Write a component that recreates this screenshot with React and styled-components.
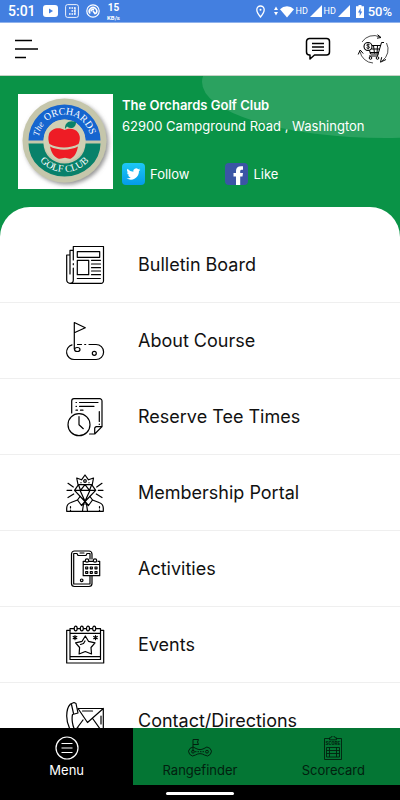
import React from "react";
import styled, { createGlobalStyle } from "styled-components";

const menuItems = [
  { label: "Bulletin Board", href: "#bulletin", icon: <BulletinIcon /> },
  { label: "About Course", href: "#about", icon: <CourseIcon /> },
  { label: "Reserve Tee Times", href: "#tee-times", icon: <TeeTimesIcon /> },
  { label: "Membership Portal", href: "#membership", icon: <MembershipIcon /> },
  { label: "Activities", href: "#activities", icon: <ActivitiesIcon /> },
  { label: "Events", href: "#events", icon: <EventsIcon /> },
  { label: "Contact/Directions", href: "#contact", icon: <ContactIcon /> },
];

const App = () => {
  return (
    <>
      <GlobalStyle />
      <Screen>
        <StatusBar />
        <Header>
          <IconButton aria-label="Open menu">
            <svg width="24" height="22" viewBox="0 0 24 22" stroke="#000" strokeWidth="1.6">
              <path d="M0 2.5h17M0 11h23M0 19.5h11" />
            </svg>
          </IconButton>
          <HeaderActions>
            <IconButton aria-label="Messages">
              <ChatIcon />
            </IconButton>
            <IconButton aria-label="Cart">
              <CartIcon />
            </IconButton>
          </HeaderActions>
        </Header>
        <Main>
          <Hero>
            <ClubLogo />
            <ClubInfo>
              <ClubName>The Orchards Golf Club</ClubName>
              <Address>62900 Campground Road , Washington</Address>
              <Socials>
                <SocialLink href="#twitter">
                  <TwitterIcon /> Follow
                </SocialLink>
                <SocialLink href="#facebook">
                  <FacebookIcon /> Like
                </SocialLink>
              </Socials>
            </ClubInfo>
          </Hero>
          <Sheet>
            {menuItems.map((item) => (
              <MenuLink href={item.href} key={item.label}>
                {item.icon}
                {item.label}
              </MenuLink>
            ))}
          </Sheet>
        </Main>
        <TabBar>
          <Tab $active>
            <MenuTabIcon />
            Menu
          </Tab>
          <Tab>
            <RangeIcon />
            Rangefinder
          </Tab>
          <Tab>
            <ScoreIcon />
            Scorecard
          </Tab>
        </TabBar>
        <GestureBar>
          <Pill />
        </GestureBar>
      </Screen>
    </>
  );
};

function StatusBar() {
  return (
    <Status>
      <Clock>5:01</Clock>
      <StatusGroup>
        <svg width="15" height="12" viewBox="0 0 15 12">
          <rect width="15" height="12" rx="3" fill="#fff" />
          <path d="M6 3.5v5l4-2.5z" fill="#437fe0" />
        </svg>
        <svg width="14" height="14" viewBox="0 0 14 14" fill="none" stroke="#fff">
          <rect x=".6" y=".6" width="12.8" height="12.8" rx="2" strokeWidth=".9" />
          <path d="M4 4h6.500M6.500 7h4M4 10h6.500" strokeWidth="1.500" strokeDasharray="1.600 .9" />
          <path d="M10 3.500v7" strokeWidth="1" />
        </svg>
        <svg width="14" height="14" viewBox="0 0 14 14" fill="none" stroke="#fff">
          <circle cx="7" cy="7" r="6.200" strokeWidth="1.200" />
          <path d="M4.200 9.600a3.700 3.700 0 1 1 5.600 0M7 7l2.500 3.300M5 7.500a2 2 0 0 1 3-1.800" strokeWidth="1.600" />
        </svg>
        <Speed>
          <b>15</b>
          <small>KB/s</small>
        </Speed>
      </StatusGroup>
      <Signals>
        <PinSvg width="9" height="13" viewBox="0 0 9 13" fill="none" stroke="#fff" strokeWidth="1.300">
          <path d="M4.500 12C2 9 .8 6.500.8 4.700a3.700 3.700 0 0 1 7.400 0C8.200 6.500 7 9 4.500 12z" />
          <circle cx="4.500" cy="4.700" r="1" fill="#fff" stroke="none" />
        </PinSvg>
        <svg width="20" height="13" viewBox="0 0 20 13" fill="#fff">
          <path d="M0 5l2-3.500L4 5zM0 7l2 3.500L4 7z" />
          <path d="M6 4.200a10 10 0 0 1 14 0L13 12.500z" />
        </svg>
        <Hd>HD</Hd>
        <svg width="12" height="12" viewBox="0 0 12 12" fill="#fff">
          <path d="M12 0v12H0z" />
        </svg>
        <Hd>HD</Hd>
        <svg width="12" height="12" viewBox="0 0 12 12" fill="#fff">
          <path d="M12 0v12H0z" />
        </svg>
        <BatterySvg width="8" height="13" viewBox="0 0 8 13">
          <path d="M2.500 0h3v1.200H8V13H0V1.200h2.500z" fill="#fff" />
          <path d="M4.600 3L2 7.500h1.700V11L6.200 6.500H4.600z" fill="#437fe0" />
        </BatterySvg>
        <Percent>50%</Percent>
      </Signals>
    </Status>
  );
}

function ChatIcon() {
  return (
    <svg width="26" height="24" viewBox="0 0 26 24" fill="none" stroke="#000" strokeWidth="1.500" strokeLinejoin="round">
      <path d="M4.500 1.500h17a3 3 0 0 1 3 3V15a3 3 0 0 1-3 3H9.500L5 22v-4h-.5a3 3 0 0 1-3-3V4.500a3 3 0 0 1 3-3z" />
      <path d="M7 6.500h12M7 10h12M7 13.300h12" strokeWidth="1.300" />
    </svg>
  );
}

function CartIcon() {
  return (
    <svg width="32" height="30" viewBox="0 0 32 30" fill="none" stroke="#000">
      <path d="M5 8A14 14 0 0 1 23 3M29.500 9A14 14 0 0 1 25 27M16 29A14 14 0 0 1 3 17.500" strokeWidth=".7" />
      <path d="M20.500.7L24 3.500 20 4.200M29 25.500l-5.500 2.700 1.200-5M1.200 20.500L3.200 16l3 3.500" strokeWidth="1" />
      <circle cx="11" cy="12.500" r="4" strokeWidth="1.100" />
      <path d="M12.600 10.800c-1-1-3-.7-2.800.5.200 1 2.700.7 2.700 2 0 1.200-2 1.400-3 .4M11.100 9.700v5.800" strokeWidth=".9" />
      <path d="M27 8.500h-2.500L20.500 22H12M15 11.500h9M13 18.500h9M14.500 15h8M12.500 16.500l1 3.500h8M16.500 11.500l1 8M20.500 11.500l-.5 8" strokeWidth="1" />
      <circle cx="13.500" cy="24" r="1.300" strokeWidth="1" />
      <circle cx="20.500" cy="24" r="1.300" strokeWidth="1" />
    </svg>
  );
}

function ClubLogo() {
  return (
    <LogoBox>
      <svg width="95" height="95" viewBox="0 0 95 95" role="img" aria-label="The Orchards Golf Club">
        <defs>
          <filter id="logoShadow" x="-20%" y="-20%" width="140%" height="140%">
            <feDropShadow dx="2" dy="2" stdDeviation="2" floodColor="#777" floodOpacity=".8" />
          </filter>
          <path id="topArc" d="M20.500 46.500A26 26 0 0 1 72.500 46.500" />
          <path id="bottomArc" d="M14.500 47A32 31 0 0 0 78.500 47" />
        </defs>
        <circle cx="46.500" cy="46.500" r="42" fill="#c5c6ab" filter="url(#logoShadow)" />
        <path d="M10.500 46.500a36 36 0 0 1 72 0h-15a21 21 0 0 0-42 0z" fill="#1565cf" />
        <path d="M10.500 49.500a36 33 0 0 0 72 0h-15a21 20 0 0 1-42 0z" fill="#08816a" />
        <path d="M25.500 46.500a21 21 0 1 0 42 0 21 21 0 1 0-42 0" fill="#cfd0b4" />
        <LogoText fontSize="9" fontStyle="italic">
          <textPath href="#topArc" startOffset="4">The</textPath>
        </LogoText>
        <LogoText fontSize="10">
          <textPath href="#topArc" startOffset="21">ORCHARDS</textPath>
        </LogoText>
        <LogoText fontSize="10" textAnchor="middle">
          <textPath href="#bottomArc" startOffset="50%">GOLF CLUB</textPath>
        </LogoText>
        <path
          d="M46.500 36c-5-3-13-2-15.500 4-1.200 4-.5 7.500.5 10 8 4.500 21 4.500 29 0 1.800-4 2-8-.5-11.500C57 34 51 34 46.500 36z"
          fill="#ee1c25"
        />
        <path d="M32 52.500c8 4.200 20 4.200 28 0-1 5-3 10-7 12-2.500.7-4-.8-6-.8s-4 1.500-7 .8c-4.500-2-7-7-8-12z" fill="#ee1c25" />
        <path d="M47 35c-.5-6 4-9.500 11-7 0 6-5 7.500-9 4.500z" fill="#08816a" />
      </svg>
    </LogoBox>
  );
}

function TwitterIcon() {
  return (
    <svg width="23" height="22" viewBox="0 0 23 22">
      <defs>
        <linearGradient id="tw" x1="0" y1="0" x2="0" y2="1">
          <stop offset="0" stopColor="#1dc8f5" />
          <stop offset="1" stopColor="#049be9" />
        </linearGradient>
      </defs>
      <rect width="23" height="22" rx="4" fill="url(#tw)" />
      <path
        transform="translate(4.500 4) scale(.58)"
        fill="#fff"
        d="M24 4.600a10 10 0 0 1-2.800.8 5 5 0 0 0 2.100-2.700c-1 .6-2 1-3.100 1.200a4.900 4.900 0 0 0-8.400 4.500A14 14 0 0 1 1.700 3.200a4.900 4.900 0 0 0 1.500 6.500c-.8 0-1.600-.2-2.200-.6a4.900 4.900 0 0 0 3.900 4.900c-.7.200-1.500.2-2.200.1a4.900 4.900 0 0 0 4.600 3.400A9.900 9.900 0 0 1 0 19.500a14 14 0 0 0 21.500-12.400c1-.7 1.800-1.600 2.500-2.500z"
      />
    </svg>
  );
}

function FacebookIcon() {
  return (
    <svg width="23" height="22" viewBox="0 0 23 22">
      <rect width="23" height="22" rx="4" fill="#3b55a5" />
      <path d="M11 22v-8.500H8.500V10H11V8c0-3.800 2.200-5.300 7-4.700v3.400c-2.200 0-2.800.3-2.800 1.600V10H18l-.5 3.500h-2.300V22z" fill="#fff" />
    </svg>
  );
}

function BulletinIcon() {
  return (
    <LineIcon viewBox="0 0 40 40">
      <path d="M8.300 15V1.500h30.200V36a2.300 2.300 0 0 1-2.300 2.300H5A3.300 3.300 0 0 1 1.700 35V10h3.300M5 29V5.300h3.300M8.300 23v12A3.300 3.300 0 0 1 5 38.300M8.300 18.700v1" />
      <path d="M12.300 6.700h22.400v5.600H12.300zM12.300 15.300h11.400v14.400H12.300zM26.500 15.300h9M26.500 19h9M26.500 22.700h9M26.500 26h9M26.500 29.700h9M12.300 33.500h23" />
    </LineIcon>
  );
}

function CourseIcon() {
  return (
    <LineIcon viewBox="0 0 40 40">
      <path d="M9.300 28V1.500l11 5.200-11 5" />
      <path d="M7 23.800A7.500 7.500 0 0 0 9.200 38.500h21.900a7.500 7.500 0 0 0 0-15H24M12.500 23.500h4M19.700 23.500h1" />
      <ellipse cx="12.300" cy="28.500" rx="2.700" ry="2" />
      <circle cx="29.300" cy="32.300" r="2" />
    </LineIcon>
  );
}

function TeeTimesIcon() {
  return (
    <LineIcon viewBox="0 0 40 40">
      <path d="M6.700 16V4a2.300 2.300 0 0 1 2.300-2.300h25.700A2.300 2.300 0 0 1 37 4v25.700L29.700 37h-5.200M37 29.700h-5.500a1.800 1.800 0 0 0-1.800 1.800V37" />
      <path d="M11 5.500h.5M14.500 5.500H33M11 9.300h.5M14.500 9.300H29M11 13.200h1.500M15.500 13.200h2.500M34.300 14.500v10M34.300 27v.5" />
      <circle cx="14" cy="27.700" r="11" />
      <path d="M14 19.500v8.200l4.300 4" />
    </LineIcon>
  );
}

function MembershipIcon() {
  return (
    <LineIcon viewBox="0 0 40 40">
      <path d="M13 11.500L11.700 5l4.800 1.800L20 2l3.500 4.800L28.500 5l-1.200 6.500" />
      <circle cx="20" cy="8" r="1.300" />
      <path d="M16 9.500v.3M24 9.500v.3" />
      <path d="M13.500 11.700h13.200l4 5.600L20 28.500 9.500 17.300zM9.500 17.300h21.200M15 17.300l5 11 5-11M13.500 11.700l2 5.600 4.500-5.600 4.500 5.600 2.200-5.600" />
      <path d="M3 10.300L8.300 14M2 17.300h4.700M3 24.500L8.700 21M37 10.300L31.700 14M38 17.300h-4.700M37 24.500L31.300 21" />
      <path d="M12.500 27L6 29.500a6 6 0 0 0-4.300 5.500v3.300h36.600V35a6 6 0 0 0-4.300-5.500L27.500 27" />
      <path d="M15 23.500l-2.500 3.500 4 5.500 3.500-4 3.500 4 4-5.500-2.500-3.500M18.500 31l-1 7M21.500 31l1 7M18.500 31h3M5.500 33.500v1.500M5.500 37v1M34.500 33.500v1.500M34.500 37v1" />
    </LineIcon>
  );
}

function ActivitiesIcon() {
  return (
    <LineIcon viewBox="0 0 40 40">
      <path d="M27 10V5a3 3 0 0 0-3-3H9.500a3 3 0 0 0-3 3v29.500a3 3 0 0 0 3 3H24a3 3 0 0 0 3-3V27" />
      <path d="M25 10V4.500h-3l-1 2h-8l-1-2H8.700V35H25v-8" />
      <path d="M15 4h4" />
      <circle cx="16.700" cy="31.300" r="1.300" />
      <path d="M20 12.300h-1.800v14.400h16.500V12.300H33M24 12.300h4M18.200 15.500h16.500" />
      <circle cx="22" cy="11.500" r="1.700" />
      <circle cx="30" cy="11.500" r="1.700" />
      <path d="M20.700 18h2v1.800h-2zM25.300 18h2v1.800h-2zM30 18h2v1.800h-2zM20.700 22.500h2v1.800h-2zM25.300 22.500h2v1.800h-2zM30 22.500h2v1.800h-2z" />
    </LineIcon>
  );
}

function EventsIcon() {
  return (
    <LineIcon viewBox="0 0 40 40">
      <path d="M5 5.300H1.700V38h37V5.300h-3.200" />
      <path d="M9 3.700H5v30.800h30.500V3.700H31M12.300 3.700H15M18.500 3.700h2.700M24.800 3.700h2.700M5 8.300h30.500M5 31.700h30.500" />
      <ellipse cx="10.700" cy="3.500" rx="1.500" ry="2.400" />
      <ellipse cx="16.800" cy="3.500" rx="1.500" ry="2.400" />
      <ellipse cx="23" cy="3.500" rx="1.500" ry="2.400" />
      <ellipse cx="29.200" cy="3.500" rx="1.500" ry="2.400" />
      <path d="M20.300 11l3.200 5.300 6.500 1.500-4 4.700.5 6.500-6.200-2.500-6.200 2.500.5-6.500-4-4.700 6.500-1.500z" />
      <path d="M15.500 19.500l3-1L20 16M10 10.500v4.200M8.200 11.500l3.600 2.200M11.800 11.500l-3.600 2.200M30.500 10.500v4.200M28.700 11.500l3.600 2.200M32.300 11.500l-3.600 2.200" />
    </LineIcon>
  );
}

function ContactIcon() {
  return (
    <LineIcon viewBox="0 0 40 40">
      <path d="M13 7.500h25.300V34H14M13 7.500l9.500 14 15.800-14M17.500 10h10M36 15v8M12 27l6-8M38 32l-10-14" />
      <path d="M9 1.500L5.500 3C2.500 6 1.700 10 1.700 15c0 8 4 17 10 21.500l5-3-3.500-6.500-3.500 1.500C7.500 25 6.500 18 7.500 13.500l5.500-1.500-2-9.500z" />
      <path d="M6.500 3.500l2 9" />
    </LineIcon>
  );
}

function MenuTabIcon() {
  return (
    <svg width="24" height="24" viewBox="0 0 24 24" fill="none" stroke="#fff" strokeWidth="1.200">
      <circle cx="12" cy="12" r="11" />
      <path d="M6.500 7.500h11M6.500 12h11M6.500 16.500h11" />
    </svg>
  );
}

function RangeIcon() {
  return (
    <svg width="24" height="24" viewBox="0 0 24 24" fill="none" stroke="#02200f" strokeWidth="1">
      <path d="M5 15.500V3.500M5 3.500h5.500L9.500 6l1 2.500H5" />
      <path d="M8 12.500a4.300 4.300 0 1 0-.5 6.500c3-1.800 6-1.800 9 0a4.300 4.300 0 1 0-.5-6.500c-3 1.500-5 1.500-8 0z" />
      <path d="M7 15.700h10" strokeDasharray="1.500 1" />
      <circle cx="5" cy="15.700" r="1.400" />
      <circle cx="19" cy="15.700" r="1.400" />
    </svg>
  );
}

function ScoreIcon() {
  return (
    <svg width="24" height="24" viewBox="0 0 24 24" fill="none" stroke="#02200f" strokeWidth=".9">
      <path d="M9 2.500H3.500v21h17v-21H15M8.500 3.800v-2H10a2 2 0 0 1 4 0h1.500v2z" />
      <text x="12" y="9.200" fontSize="5" fontWeight="700" fontFamily="Liberation Mono, monospace" textAnchor="middle" fill="#02200f" stroke="none">
        SCORE
      </text>
      <path d="M5.500 11.500h13v9.500h-13zM5.500 14.500h13M5.500 17.500h13M8.500 11.500V21M15.500 11.500V21" />
    </svg>
  );
}

const GlobalStyle = createGlobalStyle`
  * {
    box-sizing: border-box;
  }

  body {
    margin: 0;
    font-family: "Inter", "Liberation Sans", sans-serif;
  }

  svg {
    flex-shrink: 0;
    display: block;
  }
`;

const Screen = styled.div`
  display: flex;
  flex-direction: column;
  height: 100vh;
  overflow: hidden;
`;

const Status = styled.div`
  display: flex;
  align-items: center;
  height: 23px;
  padding: 0 8px;
  background-color: #437fe0;
  border-bottom: 1px solid #8fb2ec;
  color: white;
  font-family: "Roboto", sans-serif;
`;

const Clock = styled.span`
  width: 35px;
  font-size: 14px;
  font-weight: 500;
`;

const StatusGroup = styled.div`
  display: flex;
  align-items: center;
  gap: 7px;
`;

const Speed = styled.span`
  display: flex;
  flex-direction: column;
  align-items: center;

  b {
    font-size: 10px;
    line-height: 12px;
    font-weight: 700;
  }

  small {
    font-size: 6px;
    line-height: 7px;
    font-weight: 700;
  }
`;

const Signals = styled.div`
  display: flex;
  align-items: center;
  margin-left: auto;
`;

const PinSvg = styled.svg`
  margin-right: 9px;
`;

const Hd = styled.span`
  width: 16px;
  font-size: 9px;
  text-align: center;
`;

const BatterySvg = styled.svg`
  margin: 0 4px 0 6px;
`;

const Percent = styled.span`
  font-size: 13px;
  font-weight: 500;
`;

const Header = styled.header`
  display: flex;
  align-items: center;
  justify-content: space-between;
  height: 53px;
  padding: 0 11px 0 15px;
  background-color: white;
  border-bottom: 1px solid #c6d3c6;
`;

const HeaderActions = styled.div`
  display: flex;
  align-items: center;
  gap: 26px;
`;

const IconButton = styled.button`
  padding: 0;
  border: none;
  background: none;

  &:hover {
    cursor: pointer;
  }
`;

const Main = styled.main`
  position: relative;
  flex: 1;
  min-height: 0;
  overflow: hidden;
  background-color: #0a9347;

  &::before {
    content: "";
    position: absolute;
    top: -50px;
    right: -168px;
    width: 366px;
    height: 112px;
    border-radius: 50%;
    background-color: #2ba260;
  }
`;

const Hero = styled.section`
  position: relative;
  display: flex;
  gap: 9px;
  padding: 18px 18px 18px;
  color: white;
`;

const LogoBox = styled.div`
  flex-shrink: 0;
  background-color: white;
`;

const LogoText = styled.text`
  fill: white;
  font-family: "Liberation Serif", serif;
`;

const ClubInfo = styled.div`
  display: flex;
  flex-direction: column;
  padding-top: 1px;
  white-space: nowrap;
`;

const ClubName = styled.h1`
  margin: 0;
  font-size: 13px;
  line-height: 20px;
  font-weight: 600;
`;

const Address = styled.p`
  margin: 0;
  font-size: 13px;
  line-height: 22px;
`;

const Socials = styled.div`
  display: flex;
  gap: 36px;
  margin-top: 25px;
`;

const SocialLink = styled.a`
  display: flex;
  align-items: center;
  gap: 5px;
  font-size: 13px;
  line-height: 24px;
  text-decoration: none;
  color: white;
`;

const Sheet = styled.nav`
  position: relative;
  padding-top: 20px;
  border-radius: 30px 30px 0 0;
  background-color: white;
`;

const MenuLink = styled.a`
  display: flex;
  align-items: center;
  gap: 33px;
  height: 76px;
  padding-left: 65px;
  border-bottom: 1px solid #efefef;
  font-size: 18px;
  text-decoration: none;
  color: #111;
`;

const LineIcon = styled.svg`
  width: 40px;
  height: 40px;
  fill: none;
  stroke: #000;
  stroke-width: 1.2;
  stroke-linecap: round;
  stroke-linejoin: round;
`;

const TabBar = styled.nav`
  display: flex;
  background-color: #047634;
`;

const Tab = styled.button`
  flex: 1 1 0;
  display: flex;
  flex-direction: column;
  align-items: center;
  gap: 2px;
  height: 57px;
  padding: 8px 0 0;
  border: none;
  background-color: ${(props) => (props.$active ? "black" : "transparent")};
  color: ${(props) => (props.$active ? "white" : "#02200f")};
  font-family: inherit;
  font-size: 13px;
  line-height: 16px;

  &:hover {
    cursor: pointer;
  }
`;

const GestureBar = styled.div`
  display: flex;
  align-items: center;
  justify-content: center;
  height: 15px;
  padding-top: 1px;
  background-color: black;
`;

const Pill = styled.div`
  width: 68px;
  height: 3px;
  border-radius: 2px;
  background-color: white;
`;

export default App;
